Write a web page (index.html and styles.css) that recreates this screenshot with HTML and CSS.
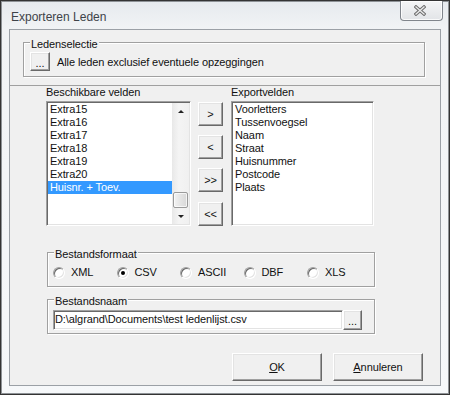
FILE: index.html
```html
<!DOCTYPE html>
<html>
<head>
<meta charset="utf-8">
<title>Exporteren Leden</title>
<link rel="stylesheet" href="styles.css">
</head>
<body>
<div class="window">
  <div class="titlebar">
    <span class="title">Exporteren Leden</span>
    <div class="close">
      <svg width="12" height="11" viewBox="0 0 12 11">
        <path d="M2 2 L10 9 M10 2 L2 9" stroke="#6e6e6e" stroke-width="3.4" stroke-linecap="square" fill="none"/>
        <path d="M2 2 L10 9 M10 2 L2 9" stroke="#ececec" stroke-width="1.3" stroke-linecap="square" fill="none"/>
      </svg>
    </div>
  </div>
  <div class="client">
    <div class="top">
      <div class="group sel-group">
        <div class="legend">Ledenselectie</div>
        <div class="selrow">
          <button class="btn dots">...</button>
          <span>Alle leden exclusief eventuele opzeggingen</span>
        </div>
      </div>
    </div>
    <div class="panel">
      <div class="lists">
        <div class="col left">
          <div class="lbl">Beschikbare velden</div>
          <div class="listbox">
            <div class="items">
              <div class="item">Extra15</div>
              <div class="item">Extra16</div>
              <div class="item">Extra17</div>
              <div class="item">Extra18</div>
              <div class="item">Extra19</div>
              <div class="item">Extra20</div>
              <div class="item sel">Huisnr. + Toev.</div>
            </div>
            <div class="scrollbar">
              <div class="sb-btn"><span class="arrow up"></span></div>
              <div class="sb-track"><div class="sb-thumb"></div></div>
              <div class="sb-btn"><span class="arrow down"></span></div>
            </div>
          </div>
        </div>
        <div class="movebtns">
          <button class="btn mbtn">&gt;</button>
          <button class="btn mbtn">&lt;</button>
          <button class="btn mbtn">&gt;&gt;</button>
          <button class="btn mbtn last">&lt;&lt;</button>
        </div>
        <div class="col right">
          <div class="lbl">Exportvelden</div>
          <div class="listbox">
            <div class="items">
              <div class="item">Voorletters</div>
              <div class="item">Tussenvoegsel</div>
              <div class="item">Naam</div>
              <div class="item">Straat</div>
              <div class="item">Huisnummer</div>
              <div class="item">Postcode</div>
              <div class="item">Plaats</div>
            </div>
          </div>
        </div>
      </div>
      <div class="group fmt-group">
        <div class="legend">Bestandsformaat</div>
        <div class="radios">
          <div class="radio"><span class="circle"></span>XML</div>
          <div class="radio"><span class="circle on"></span>CSV</div>
          <div class="radio"><span class="circle"></span>ASCII</div>
          <div class="radio"><span class="circle"></span>DBF</div>
          <div class="radio"><span class="circle"></span>XLS</div>
        </div>
      </div>
      <div class="group fn-group">
        <div class="legend">Bestandsnaam</div>
        <div class="fnrow">
          <div class="edit">D:\algrand\Documents\test ledenlijst.csv</div>
          <button class="btn browse">...</button>
        </div>
      </div>
      <div class="actions">
        <button class="btn abtn"><u>O</u>K</button>
        <button class="btn abtn"><u>A</u>nnuleren</button>
      </div>
    </div>
  </div>
</div>
</body>
</html>
```

FILE: styles.css
```css
* { box-sizing: border-box; }
html, body { margin: 0; padding: 0; }
body {
  width: 450px;
  height: 395px;
  overflow: hidden;
  background: #ffffff;
  font-family: "Liberation Sans", Arial, sans-serif;
  font-size: 11px;
  letter-spacing: -0.1px;
  color: #111;
}
.window {
  width: 450px;
  height: 395px;
  border: 1px solid #343434;
  box-shadow: inset 0 0 0 1px #8e9296;
  background: linear-gradient(180deg, #e6eaee 0px, #f1f3f5 28px, #f6f8fa 100%);
  padding: 0 8px 8px;
  display: flex;
  flex-direction: column;
}
.titlebar {
  height: 28px;
  flex: none;
  display: flex;
  justify-content: space-between;
  align-items: flex-start;
  margin-right: -2px;
}
.title {
  margin: 8px 0 0 2px;
  font-size: 12px;
  letter-spacing: 0;
  line-height: 16px;
  color: #3e4349;
}
.close {
  width: 43px;
  height: 20px;
  border: 1px solid #80858c;
  border-top: none;
  border-radius: 0 0 4px 4px;
  background: linear-gradient(180deg, #f4f5f6, #e2e4e7);
  box-shadow: inset 0 0 0 1px rgba(255,255,255,0.8);
  display: flex;
  align-items: center;
  justify-content: center;
  padding-right: 4px;
}
.client {
  flex: 1;
  border: 1px solid #9ba0a6;
  background: #f0f0f0;
  display: flex;
  flex-direction: column;
}
.top {
  height: 55px;
  flex: none;
  padding: 12px 15px 0 13px;
}
.group {
  height: 35px;
  border: 1px solid #a0a0a0;
  box-shadow: inset 1px 1px 0 #fff, 1px 1px 0 #fff;
}
.legend {
  width: max-content;
  margin: -5px 0 0 6px;
  padding: 0 1px;
  line-height: 13px;
  height: 13px;
  background: #f0f0f0;
}
.selrow {
  display: flex;
  align-items: center;
  gap: 7px;
  margin: 1px 0 0 6px;
}
.btn {
  font: inherit;
  letter-spacing: inherit;
  color: #111;
  padding: 0;
  margin: 0;
  background: #f0f0f0;
  border: 1px solid;
  border-color: #ffffff #696969 #696969 #ffffff;
  box-shadow: inset -1px -1px 0 #a0a0a0, inset 1px 1px 0 #e3e3e3;
  line-height: 13px;
}
.dots {
  width: 20px;
  height: 19px;
  padding-top: 3px;
}
.panel {
  flex: 1;
  border-top: 1px solid #a0a0a0;
  padding-left: 36px;
  display: flex;
  flex-direction: column;
}
.lists {
  display: flex;
  height: 140px;
  flex: none;
}
.col {
  display: flex;
  flex-direction: column;
}
.col.left { width: 145px; }
.col.right { width: 143px; margin-left: 8px; }
.lbl {
  line-height: 13px;
  height: 15px;
}
.listbox {
  height: 125px;
  background: #fff;
  border: 1px solid;
  border-color: #a0a0a0 #ffffff #ffffff #a0a0a0;
  box-shadow: inset 1px 1px 0 #696969, inset -1px -1px 0 #e3e3e3;
  padding: 1px;
  display: flex;
}
.items { flex: 1; }
.item {
  height: 13px;
  line-height: 13px;
  padding-left: 2px;
  white-space: nowrap;
}
.item.sel {
  background: #3399ff;
  color: #fff;
}
.scrollbar {
  width: 17px;
  display: flex;
  flex-direction: column;
  background: linear-gradient(90deg, #e8e8e8, #f4f4f4 40%, #f0f0f0);
}
.sb-btn {
  height: 16px;
  flex: none;
  display: flex;
  align-items: center;
  justify-content: center;
}
.arrow {
  width: 0;
  height: 0;
  border-left: 3px solid transparent;
  border-right: 3px solid transparent;
}
.arrow.up { border-bottom: 3px solid #222; }
.arrow.down { border-top: 3px solid #222; }
.sb-track {
  flex: 1;
  display: flex;
  flex-direction: column;
  justify-content: flex-end;
  padding: 0 1px;
}
.sb-thumb {
  height: 16px;
  border: 1px solid #9a9a9a;
  border-radius: 2px;
  background: linear-gradient(90deg, #f3f3f3, #e4e4e4 50%, #d8d8d8);
  box-shadow: inset 0 0 0 1px rgba(255,255,255,0.7);
}
.movebtns {
  width: 25px;
  margin-left: 7px;
  padding-top: 16px;
  display: flex;
  flex-direction: column;
  gap: 9px;
}
.mbtn { height: 24px; }
.mbtn.last { margin-top: 1px; }
.fmt-group {
  margin: 26px 0 0 1px;
  width: 328px;
}
.radios {
  display: grid;
  grid-template-columns: repeat(5, 63.5px);
  margin: 5px 0 0 5px;
}
.radio {
  display: flex;
  align-items: center;
  height: 13px;
  line-height: 13px;
}
.circle {
  width: 12px;
  height: 12px;
  flex: none;
  border-radius: 50%;
  border: 1px solid;
  border-color: #a0a0a0 #ffffff #ffffff #a0a0a0;
  box-shadow: inset 1px 1px 0 #696969, inset -1px -1px 0 #e3e3e3;
  background: #fff;
  margin-right: 6px;
  display: flex;
  align-items: center;
  justify-content: center;
}
.circle.on::after {
  content: "";
  width: 4px;
  height: 4px;
  border-radius: 50%;
  background: #000;
}
.fn-group {
  margin: 12px 0 0 1px;
  width: 328px;
}
.fnrow {
  display: flex;
  margin: 2px 0 0 5px;
}
.edit {
  width: 290px;
  height: 20px;
  background: #fff;
  border: 1px solid;
  border-color: #a0a0a0 #ffffff #ffffff #a0a0a0;
  box-shadow: inset 1px 1px 0 #696969, inset -1px -1px 0 #e3e3e3;
  padding-left: 1px;
  line-height: 17px;
  white-space: nowrap;
}
.browse {
  width: 19px;
  height: 20px;
  padding-top: 3px;
}
.actions {
  display: flex;
  justify-content: flex-end;
  gap: 11px;
  margin-top: 19px;
  padding-right: 17px;
}
.abtn {
  width: 90px;
  height: 28px;
}
```
